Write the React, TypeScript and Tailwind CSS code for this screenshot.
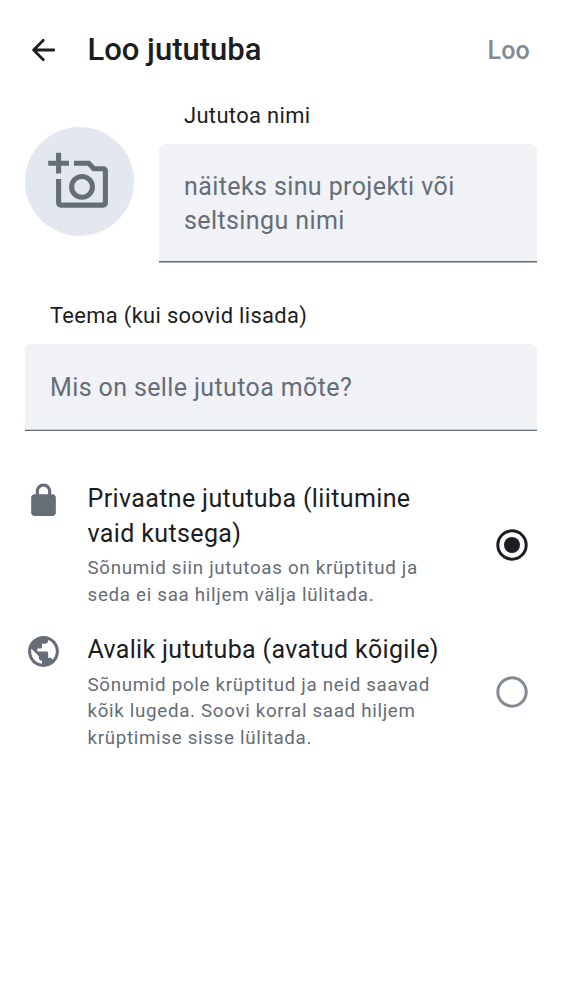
import { MdPublic } from "react-icons/md";

function BackArrow() {
  return (
    <svg className="size-8" viewBox="0 0 32 32" fill="none" stroke="#1b1d22" strokeWidth="2.8" strokeLinecap="round" strokeLinejoin="round">
      <path d="M26.8 16H6.8M16.3 6.3 6.6 16l9.7 9.7" />
    </svg>
  );
}

function LockIcon() {
  return (
    <svg className="mt-[0.5px] size-[37px] shrink-0 text-[#656d77]" viewBox="0 0 24 24" fill="currentColor">
      <path d="M18 8h-1V6c0-2.76-2.24-5-5-5S7 3.24 7 6v2H6c-1.1 0-2 .9-2 2v10c0 1.1.9 2 2 2h12c1.1 0 2-.9 2-2V10c0-1.1-.9-2-2-2zM9 8V6c0-1.66 1.34-3 3-3s3 1.34 3 3v2H9z" />
    </svg>
  );
}

function AddPhotoIcon() {
  return (
    <svg className="size-[109px] shrink-0" viewBox="0 0 109 109" fill="none" stroke="#656d77" strokeWidth="5.1">
      <path d="M23.2 36.2h20.8M33.6 25.8v20.8" />
      <path d="M49 36.2h14.8l5 5.5h9.6a2 2 0 0 1 2 2v32.4a2 2 0 0 1-2 2H35.6a2 2 0 0 1-2-2V52" />
      <circle cx="57" cy="59.9" r="10.4" />
    </svg>
  );
}

function Radio({ checked }: { checked?: boolean }) {
  return (
    <svg className="size-8" viewBox="0 0 32 32" role="radio" aria-checked={!!checked}>
      <circle cx="16" cy="16" r="14.2" fill="none" stroke={checked ? "#1b1d22" : "#818a95"} strokeWidth="3" />
      {checked && <circle cx="16" cy="16" r="8" fill="#1b1d22" />}
    </svg>
  );
}

export default function App() {
  return (
    <main className="h-[1000px] w-[562px] bg-white font-[Roboto,sans-serif] text-[#1b1d22]">
      <header className="flex h-[100px] items-center pl-[27px] pr-8">
        <BackArrow />
        <h1 className="ml-[28.5px] text-[31px] font-medium leading-10">Loo jututuba</h1>
        <button className="ml-auto pt-[2px] text-[25px] font-medium tracking-[0.2px] text-[#818a95]">Loo</button>
      </header>

      <section className="flex h-[163px] px-[25px]">
        <button className="mt-[26.5px] flex size-[109.3px] shrink-0 items-center justify-center rounded-full bg-[#e3e8f0]">
          <AddPhotoIcon />
        </button>
        <div className="ml-[24.7px] flex-1">
          <label className="block h-[44px] pl-[25px] text-[21.9px] leading-[32px] tracking-[0.37px]">Jututoa nimi</label>
          <div className="h-[118px] rounded-t-[6px] border-b border-[#656d77] bg-[#f0f2f5] pl-[25px] pt-[26px] text-[25px] leading-[34px] tracking-[0.4px] text-[#656d77] shadow-[0_1px_0_#a8adb5]">
            näiteks sinu projekti või<br />seltsingu nimi
          </div>
        </div>
      </section>

      <section className="mt-[37px] px-[25px]">
        <label className="block h-[44px] pl-[25px] text-[21.9px] leading-[32px] tracking-[0.34px]">Teema (kui soovid lisada)</label>
        <div className="h-[87px] rounded-t-[6px] border-b border-[#656d77] bg-[#f0f2f5] pl-[25px] pt-[27px] text-[25px] leading-[34px] tracking-[0.38px] text-[#656d77] shadow-[inset_0_-1px_0_#ccd1d6]">
          Mis on selle jututoa mõte?
        </div>
      </section>

      <section className="mt-[50px] pl-[25px] pr-[34px]">
        <div className="flex h-[151px]">
          <LockIcon />
          <div className="ml-[25.5px] flex-1 pt-px">
            <h2 className="text-[25px] leading-[34.5px] tracking-[0.37px]">Privaatne jututuba (liitumine<br />vaid kutsega)</h2>
            <p className="mt-[4px] text-[18.75px] leading-[26.5px] tracking-[0.7px] text-[#656d77]">Sõnumid siin jututoas on krüptitud ja<br />seda ei saa hiljem välja lülitada.</p>
          </div>
          <div className="mt-[48px]"><Radio checked /></div>
        </div>
        <div className="flex">
          <MdPublic className="mt-[1px] size-[37px] shrink-0 text-[#656d77]" />
          <div className="ml-[25.5px] flex-1 pt-px">
            <h2 className="text-[25px] leading-[34.5px] tracking-[0.33px]">Avalik jututuba (avatud kõigile)</h2>
            <p className="mt-[4px] text-[18.75px] leading-[26.7px] tracking-[0.68px] text-[#656d77]">Sõnumid pole krüptitud ja neid saavad<br />kõik lugeda. Soovi korral saad hiljem<br />krüptimise sisse lülitada.</p>
          </div>
          <div className="mt-[44px]"><Radio /></div>
        </div>
      </section>
    </main>
  );
}
